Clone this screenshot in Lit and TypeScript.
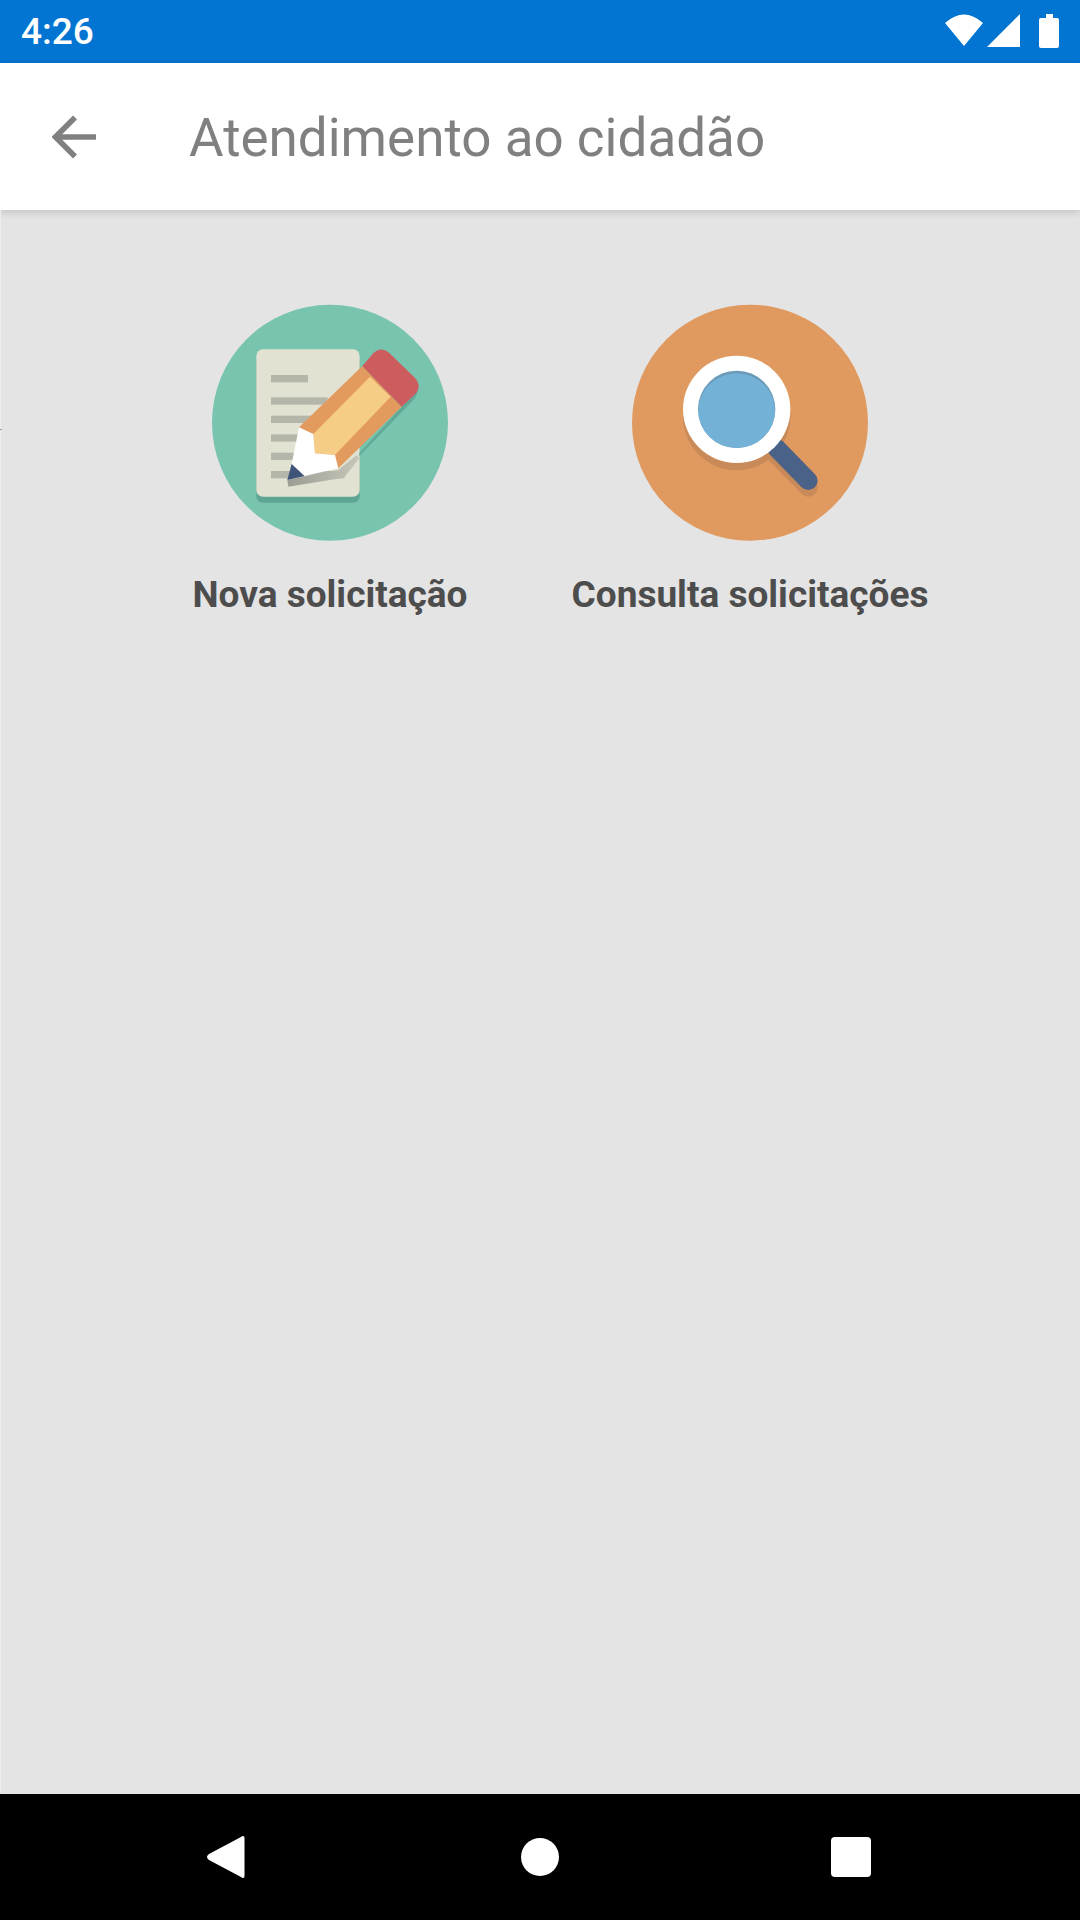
import { LitElement, html, css, svg } from "lit";
import { customElement } from "lit/decorators.js";

const wifiIcon = svg`<path d="M945 23 Q964 6 983 23 L964 46 Z" fill="#fff" />`;
const signalIcon = svg`<path d="M987 47 L1020 14 L1020 47 Z" fill="#fff" />`;

const noteIcon = svg`
  <defs>
    <linearGradient id="tipShadow" x1="0" x2="1" y1="0" y2="0">
      <stop offset="0" stop-color="#9c9d93" />
      <stop offset="1" stop-color="#c6c7b9" />
    </linearGradient>
  </defs>
  <circle cx="390" cy="398" r="354" fill="#78c4ae" />
  <rect x="169" y="196" width="310" height="442" rx="20" fill="#5da592" />
  <rect x="169" y="178" width="310" height="442" rx="20" fill="#e2e2d2" />
  <g fill="#b4b6a9">
    <rect x="213" y="255" width="111" height="22" />
    <rect x="213" y="322" width="170" height="22" />
    <rect x="213" y="377" width="130" height="22" />
    <rect x="213" y="433" width="100" height="22" />
    <rect x="213" y="488" width="80" height="22" />
    <rect x="213" y="543" width="220" height="22" />
  </g>
  <path d="M605 350 L655 300 L645 325 L478 498 L478 490 Z" fill="#62a997" />
  <path d="M415 540 L262 570 L265 590 L432 563 L478 505 L470 495 Z" fill="url(#tipShadow)" />
  <path d="M297 412 L487 228 L605 350 L415 535 L340 490 Z" fill="#e39a5e" />
  <path d="M340 432 L510 260 L572 320 L405 495 L345 490 Z" fill="#f5cd86" />
  <path d="M297 412 L340 432 L345 490 L405 495 L415 535 L313 558 L275 522 Z" fill="#fff" />
  <path d="M275 522 L262 570 L313 558 Z" fill="#3f5479" />
  <path d="M487 228 L520 190 Q542 168 567 188 L643 262 Q668 290 645 313 L605 350 Z" fill="#cd5c5e" />
`;

const searchIcon = svg`
  <circle cx="390" cy="398" r="354" fill="#e0995f" />
  <circle cx="350" cy="380" r="161" fill="#c88a59" />
  <path d="M470 495 L565 592" stroke="#c88a59" stroke-width="56" stroke-linecap="round" />
  <path d="M470 475 L565 572" stroke="#4a6288" stroke-width="56" stroke-linecap="round" />
  <circle cx="350" cy="358" r="161" fill="#fff" />
  <circle cx="350" cy="358" r="116" fill="#6a9ab8" />
  <ellipse cx="350" cy="362" rx="115" ry="112" fill="#74b1d6" />
`;

@customElement("app-root")
export class AppRoot extends LitElement {
  static styles = css`
    :host {
      display: flex;
      flex-direction: column;
      width: 1080px;
      height: 1920px;
      font-family: Roboto, sans-serif;
      background: #e4e4e4;
    }
    .status {
      height: 63px;
      flex: none;
      background: #0274d2;
      position: relative;
      display: flex;
      align-items: center;
      padding-left: 21px;
      color: #fff;
      font-size: 37px;
      font-weight: 500;
    }
    .status-icons {
      position: absolute;
      left: 0;
      top: 0;
    }
    .toolbar {
      height: 147px;
      flex: none;
      background: #fff;
      display: flex;
      align-items: center;
      padding-left: 52px;
      box-shadow: 0 2px 8px rgba(0, 0, 0, 0.16);
      position: relative;
    }
    .toolbar svg {
      flex: none;
      display: block;
    }
    .title {
      margin-left: 93px;
      margin-top: 3px;
      font-size: 53px;
      color: #808080;
    }
    .content {
      flex: 1;
      display: flex;
      justify-content: center;
      align-items: flex-start;
      padding-top: 95px;
      box-shadow: inset 1px 0 0 #ececec;
      position: relative;
    }
    .tick {
      position: absolute;
      left: 0;
      top: 219px;
      width: 2px;
      height: 1px;
      background: #9a9a9a;
    }
    .item {
      width: 420px;
      display: flex;
      flex-direction: column;
      align-items: center;
      gap: 38px;
    }
    .item svg {
      display: block;
      width: 260px;
      height: 260px;
      margin-top: -15px;
      margin-bottom: -15px;
      filter: blur(0.5px);
    }
    .label {
      font-size: 37px;
      font-weight: 700;
      color: #4d4d4d;
      white-space: nowrap;
    }
    .nav {
      height: 126px;
      flex: none;
      background: #000;
      display: block;
    }
    .nav svg {
      display: block;
    }
  `;

  render() {
    return html`
      <div class="status">
        <span>4:26</span>
        <svg class="status-icons" width="1080" height="63" viewBox="0 0 1080 63">
          ${wifiIcon}${signalIcon}
          <path d="M1046 14 H1053 V18 H1057 Q1059 18 1059 20 V46 Q1059 48 1057 48 H1041 Q1039 48 1039 46 V20 Q1039 18 1041 18 H1046 Z" fill="#fff" />
        </svg>
      </div>
      <div class="toolbar">
        <svg width="44" height="44" viewBox="0 0 44 44">
          <path d="M44 22 H4 M23 2.500 L3.500 22 L23 41.500" fill="none" stroke="#808080" stroke-width="5.500" />
        </svg>
        <div class="title">Atendimento ao cidadão</div>
      </div>
      <div class="content">
        <div class="tick"></div>
        <div class="item">
          <svg viewBox="0 0 780 780">${noteIcon}</svg>
          <div class="label">Nova solicitação</div>
        </div>
        <div class="item">
          <svg viewBox="0 0 780 780">${searchIcon}</svg>
          <div class="label">Consulta solicitações</div>
        </div>
      </div>
      <div class="nav">
        <svg width="1080" height="126" viewBox="0 1794 1080 126">
          <path d="M243 1836 Q244.500 1836 244.500 1838 V1876 Q244.500 1878 243 1878 Q242 1878 241 1877 L209 1860 Q205 1857 209 1854 L241 1837 Q242 1836 243 1836 Z" fill="#fff" />
          <circle cx="540" cy="1857" r="19" fill="#fff" />
          <rect x="831" y="1837" width="40" height="40" rx="4" fill="#fff" />
        </svg>
      </div>
    `;
  }
}

declare global {
  interface HTMLElementTagNameMap { "app-root": AppRoot; }
}
